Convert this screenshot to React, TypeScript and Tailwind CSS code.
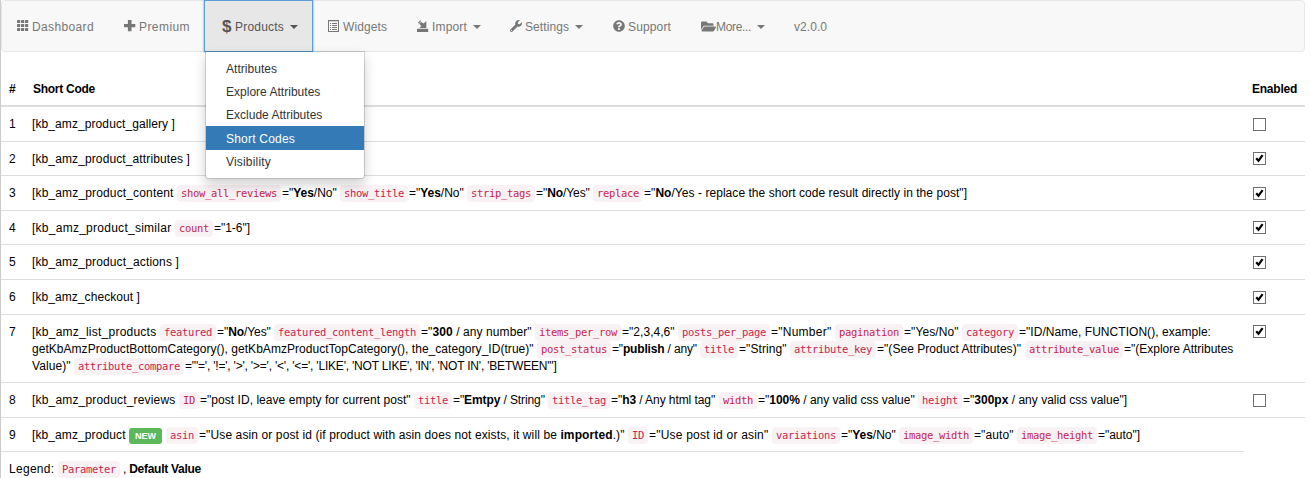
import type { ReactNode } from 'react';
import { FaFolderOpen, FaQuestionCircle, FaWrench } from 'react-icons/fa';

const FONT = '12px "Liberation Sans"';
const ctx = document.createElement('canvas').getContext('2d')!;

function measure(text: string, bold: boolean) {
  ctx.font = (bold ? 'bold ' : '') + FONT;
  return ctx.measureText(text).width;
}

/* A run of text, *bold* parts included, justified to the given width. */
function Run({ text, width }: { text: string; width: number }) {
  const parts = text.split('*').map((t, i) => ({ t, bold: i % 2 === 1 }));
  const natural = parts.reduce((sum, p) => sum + measure(p.t, p.bold), 0);
  const count = parts.reduce((sum, p) => sum + p.t.length, 0);
  return (
    <span
      className="inline-block whitespace-pre"
      style={{ width, letterSpacing: (width - natural) / count }}
    >
      {parts.map((p, i) => (p.bold ? <b key={i}>{p.t}</b> : <span key={i}>{p.t}</span>))}
    </span>
  );
}

function Code({ children }: { children: string }) {
  return (
    <code
      className="inline-block h-[17px] rounded bg-[#f9f2f4] px-1 font-['DejaVu_Sans_Mono',monospace] text-[10.5px] leading-[17px] tracking-[-0.32px] text-[#c7254e]"
      style={{ width: children.length * 6 + 8 }}
    >
      {children}
    </code>
  );
}

/* `{name}` marks a parameter; stops are the left edges of the parameters, then the line's end. */
function Line({ text, start = 32, stops }: { text: string; start?: number; stops: number[] }) {
  const pieces = text.split(/[{}]/);
  let x = start;
  const out: ReactNode[] = [];
  pieces.forEach((piece, i) => {
    if (i % 2 === 0) {
      const stop = stops[i / 2];
      const lead = piece.startsWith('=') ? 1 : 0;
      out.push(
        <span key={i} className={lead ? 'pl-px' : ''}>
          <Run text={piece} width={stop - x - lead} />
        </span>,
      );
      x = stop;
    } else if (piece === 'NEW') {
      out.push(
        <span
          key={i}
          className="mt-px h-4 w-[33px] rounded-[3px] bg-[#5cb85c] text-center text-[9px] leading-4 font-bold text-white"
        >
          NEW
        </span>,
      );
      x += 33;
    } else {
      out.push(<Code key={i}>{piece}</Code>);
      x += piece.length * 6 + 8;
    }
  });
  return <div className="flex h-[17px] whitespace-nowrap">{out}</div>;
}

type Row = {
  h: string;
  box?: string;
  checked?: boolean;
  lines: { text: string; start?: number; stops: number[] }[];
};

const rows: Row[] = [
  { h: 'h-[35px]', box: 'mt-[11px]', lines: [{ text: '[kb_amz_product_gallery ]', stops: [175] }] },
  { h: 'h-[34px]', box: 'mt-[10px]', checked: true, lines: [{ text: '[kb_amz_product_attributes ]', stops: [190] }] },
  {
    h: 'h-[35px]', box: 'mt-[11px]', checked: true,
    lines: [{
      text: '[kb_amz_product_content {show_all_reviews}="*Yes*/No" {show_title}="*Yes*/No" {strip_tags}="*No*/Yes" {replace}="*No*/Yes - replace the short code result directly in the post"]',
      stops: [177, 340, 467, 593, 967],
    }],
  },
  {
    h: 'h-[34px]', box: 'mt-[10px]', checked: true,
    lines: [{ text: '[kb_amz_product_similar {count}="1-6"]', stops: [175, 250] }],
  },
  { h: 'h-[35px]', box: 'mt-[11px]', checked: true, lines: [{ text: '[kb_amz_product_actions ]', stops: [179] }] },
  { h: 'h-[35px]', box: 'mt-[11px]', checked: true, lines: [{ text: '[kb_amz_checkout ]', stops: [140] }] },
  {
    h: 'h-[68px]', box: 'mt-[10px]', checked: true,
    lines: [
      {
        text: '[kb_amz_list_products {featured}="*No*/Yes" {featured_content_length}="*300* / any number" {items_per_row}="2,3,4,6" {posts_per_page}="Number" {pagination}="Yes/No" {category}="ID/Name, FUNCTION(), example:',
        stops: [160, 274, 535, 678, 835, 962, 1211],
      },
      {
        text: 'getKbAmzProductBottomCategory(), getKbAmzProductTopCategory(), the_category_ID(true)" {post_status}="*publish* / any" {title}="String" {attribute_key}="(See Product Attributes)" {attribute_value}="(Explore Attributes',
        stops: [537, 700, 790, 1025, 1234],
      },
      {
        text: 'Value)" {attribute_compare}="\'=\', \'!=\', \'>\', \'>=\', \'<\', \'<=\', \'LIKE\', \'NOT LIKE\', \'IN\', \'NOT IN\', \'BETWEEN\'"]',
        stops: [74, 557],
      },
    ],
  },
  {
    h: 'h-[35px]', box: 'mt-[11px]',
    lines: [{
      text: '[kb_amz_product_reviews {ID}="post ID, leave empty for current post" {title}="*Emtpy* / String" {title_tag}="*h3* / Any html tag" {width}="*100%* / any valid css value" {height}="*300px* / any valid css value"]',
      stops: [179, 414, 548, 719, 918, 1127],
    }],
  },
  {
    h: 'h-[34px]',
    lines: [{
      text: '[kb_amz_product {NEW} {asin}="Use asin or post id (if product with asin does not exists, it will be *imported*.)" {ID}="Use post id or asin" {variations}="*Yes*/No" {image_width}="auto" {image_height}="auto"]',
      stops: [129, 166, 628, 772, 899, 1017, 1140],
    }],
  },
];

function Check({ checked, className }: { checked?: boolean; className: string }) {
  return (
    <span className={`ml-[9px] block h-[13px] w-[13px] border border-[#707070] bg-white ${className}`}>
      {checked && (
        <svg viewBox="0 0 11 11" className="block h-[11px] w-[11px]">
          <path d="M2.2 5.2 4.5 7.7 8.6 2.2" fill="none" stroke="#000" strokeWidth="2.2" />
        </svg>
      )}
    </span>
  );
}

const Caret = () => (
  <span className="mt-[2px] ml-[6px] h-0 w-0 border-x-4 border-t-4 border-x-transparent border-t-current" />
);

const GridIcon = () => (
  <svg viewBox="0 0 12 12" className="h-3 w-3" fill="currentColor">
    {[0, 4, 8].flatMap((y) => [0, 4, 8].map((x) => <rect key={`${x}-${y}`} x={x} y={y} width="3.2" height="3" rx=".4" />))}
  </svg>
);
const PlusIcon = () => (
  <svg viewBox="0 0 12 12" className="h-3 w-3" fill="currentColor">
    <path d="M3.9 0h3.6v3.9h3.8v3.4H7.5v3.9H3.9V7.3H0V3.9h3.9z" />
  </svg>
);
const ListIcon = () => (
  <svg viewBox="0 0 12 12" className="h-3 w-3" fill="currentColor">
    <path fillRule="evenodd" d="M0 0h11v12H0zM1 1.2V11h9V1.2z" />
    <path d="M2 3h1v1H2zm2 0h5v1H4zM2 5h1v1H2zm2 0h5v1H4zM2 7h1v1H2zm2 0h5v1H4zM2 9h1v1H2zm2 0h5v1H4z" />
  </svg>
);
const ImportIcon = () => (
  <svg viewBox="0 0 12 12" className="h-3 w-3" fill="currentColor">
    <path d="M0 8.7h11.2V12H0zM9.3.9v7H2.4l2-1.9-2.3-2.2L4 1.9l2.7 1.5z" />
    <path d="M1 2.7 3.3.2l.8.7L1.9 3.5z" />
  </svg>
);

function NavItem({
  icon, label, width, textWidth, caret, active, gap = true,
}: {
  icon?: ReactNode; label: string; width: number; textWidth: number; caret?: boolean; active?: boolean; gap?: boolean;
}) {
  return (
    <a
      className={`flex h-[50px] shrink-0 items-center ${active ? 'relative bg-[#e7e7e7] pl-[17px] text-[#555] shadow-[0_0_0_1px_#5b9dd9,0_0_2px_1px_rgba(30,140,190,0.8)]' : 'pl-[15px] text-[#777]'}`}
      style={{ width }}
    >
      {icon && (
        <span className={active ? 'mr-px flex w-3' : gap ? 'mr-[3px] flex w-3' : 'flex w-[15px]'}>{icon}</span>
      )}
      <span className="flex pt-[2px]"><Run text={label} width={textWidth} /></span>
      {caret && <Caret />}
    </a>
  );
}

const menu = [
  ['Attributes', 51], ['Explore Attributes', 95], ['Exclude Attributes', 97], ['Short Codes', 69], ['Visibility', 45],
] as const;

export default function App() {
  return (
    <div className="h-[478px] w-[1311px] overflow-hidden bg-white font-['Liberation_Sans',Arial,sans-serif] text-[12px] leading-[17px] text-black">
      <div className="h-full w-[1305px] border-l border-[#ccc]">
        <nav className="relative flex h-[52px] rounded border border-[#e7e7e7] bg-[#f8f8f8]">
          <NavItem icon={<GridIcon />} label="Dashboard" width={107} textWidth={62} />
          <NavItem icon={<PlusIcon />} label="Premium" width={96} textWidth={51} />
          <div className="relative">
            <NavItem
              icon={<b className="inline-block text-[17px] leading-none">$</b>}
              label="Products" width={107} textWidth={49} caret active
            />
            <ul className="absolute top-[50px] left-0 z-10 h-[128px] w-[160px] rounded-b border border-black/15 bg-white bg-clip-padding pt-[5px] shadow-[0_6px_12px_rgba(0,0,0,0.175)]">
              {menu.map(([label, w]) => (
                <li
                  key={label}
                  className={
                    label === 'Short Codes'
                      ? 'flex h-6 items-center bg-[#337ab7] pt-[2px] pl-5 text-white'
                      : 'flex h-[23px] items-center pt-[2px] pl-5 text-[#333]'
                  }
                >
                  <Run text={label} width={w} />
                </li>
              ))}
            </ul>
          </div>
          <div className="flex pl-px"><NavItem icon={<ListIcon />} label="Widgets" width={89} textWidth={44} /></div>
          <NavItem icon={<ImportIcon />} label="Import" width={93} textWidth={35} caret />
          <NavItem icon={<FaWrench size={12} />} label="Settings" width={103} textWidth={44} caret />
          <NavItem icon={<FaQuestionCircle size={12} />} label="Support" width={88} textWidth={43} />
          <NavItem icon={<FaFolderOpen size={15} />} label="More..." width={93} textWidth={35} caret gap={false} />
          <NavItem label="v2.0.0" width={64} textWidth={33} />
        </nav>

        <div className="flex h-[55px] border-b-2 border-[#ddd] pt-[29px] pl-2 font-bold">
          <div className="w-6">#</div>
          <div className="w-[1219px]"><Run text="*Short Code*" width={62} /></div>
          <div><Run text="*Enabled*" width={45} /></div>
        </div>

        {rows.map((row, i) => (
          <div key={i} className={`flex ${row.h}`}>
            <div className="flex w-[1243px] shrink-0 border-b border-[#ddd] pt-[9px] pl-2">
              <div className="w-[23px] shrink-0">{i + 1}</div>
              <div>
                {row.lines.map((l, j) => <Line key={j} {...l} />)}
              </div>
            </div>
            {row.box && (
              <div className="flex-1 border-b border-[#ddd]">
                <Check checked={row.checked} className={row.box} />
              </div>
            )}
          </div>
        ))}

        <div className="pt-[9px] pl-2">
          <Line text="Legend: {Parameter} , *Default Value*" start={9} stops={[58, 201]} />
        </div>
      </div>
    </div>
  );
}
